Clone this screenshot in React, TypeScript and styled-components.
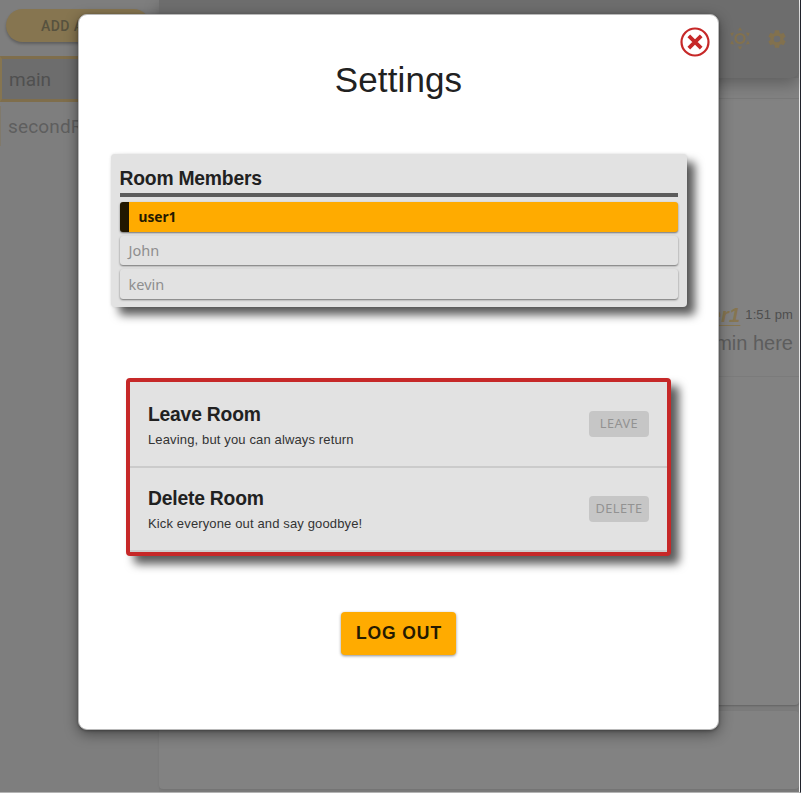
import React from "react";
import styled, { createGlobalStyle } from "styled-components";

const Global = createGlobalStyle`
  * { box-sizing: border-box; }
  html, body { margin: 0; padding: 0; overflow: hidden; }
  body { font-family: "Liberation Sans", Arial, sans-serif; color: #212121; }
  h1, h2, h3, p { margin: 0; }
  button { font: inherit; border: 0; padding: 0; margin: 0; }
`;

const Page = styled.div`
  position: relative;
  display: flex;
  width: 801px;
  height: 793px;
  overflow: hidden;
  background: #7e7e7e;
  border-right: 1px solid #20222b;
  border-bottom: 1px solid #b4b4b4;
`;

const Sidebar = styled.aside`
  width: 159px;
  flex: none;
  background: #7e7e7e;
  font-family: Roboto, sans-serif;
`;

const AddButton = styled.button`
  display: block;
  width: 144px;
  height: 33px;
  margin: 9px 0 0 6px;
  padding-left: 35px;
  border-radius: 17px;
  background: #867550;
  color: #57523f;
  font-size: 14px;
  line-height: 32px;
  font-weight: 500;
  letter-spacing: 0.4px;
  text-align: left;
  white-space: nowrap;
  box-shadow: 0 2px 3px rgba(0, 0, 0, 0.25);
`;

const RoomList = styled.nav`
  margin-top: 14px;
  font-size: 19px;
`;

const RoomItem = styled.div<{ $active?: boolean }>`
  display: flex;
  align-items: center;
  height: ${(p) => (p.$active ? 46 : 40)}px;
  margin-top: ${(p) => (p.$active ? 0 : 4)}px;
  padding-left: 7px;
  color: ${(p) => (p.$active ? "#505050" : "#5e5e5e")};
  background: ${(p) => (p.$active ? "#6d6d6d" : "transparent")};
  border: ${(p) => (p.$active ? "3px solid #7f6e4c" : "0")};
  border-left: ${(p) => (p.$active ? "2px solid #867550" : "1px solid #80796b")};
  letter-spacing: ${(p) => (p.$active ? 0 : 0.15)}px;
`;

const Main = styled.main`
  display: flex;
  flex-direction: column;
  flex: 1;
  border-right: 1px solid #f4f4f4;
  background: #7b7b7b;
`;

const Header = styled.header`
  position: relative;
  z-index: 1;
  flex: none;
  display: flex;
  justify-content: flex-end;
  gap: 15px;
  height: 78px;
  padding: 28px 11px 0 0;
  background: #6d6d6d;
  border-radius: 0 0 8px 0;
  color: #82714e;
  box-shadow: 0 6px 16px rgba(0, 0, 0, 0.28);
`;

const Feed = styled.section`
  flex: none;
  display: flex;
  flex-direction: column;
  height: 627px;
  background: #828282;
  border-radius: 0 0 4px 4px;
  box-shadow: 0 1px 2px rgba(0, 0, 0, 0.2);
`;

const FeedTop = styled.div`
  height: 21px;
  border-bottom: 1px solid #797979;
`;

const Message = styled.article`
  display: flex;
  flex-direction: column;
  align-items: flex-end;
  height: 278px;
  padding: 204px 6px 0 0;
  border-bottom: 1px solid #7b7b7b;
`;

const Meta = styled.div`
  display: flex;
  align-items: flex-start;
  gap: 5px;
  height: 28px;
  font-size: 13px;
  line-height: 24px;
  color: #4e4e4e;
  letter-spacing: 0.1px;
`;

const Author = styled.span`
  color: #867550;
  font-size: 20px;
  line-height: 25px;
  font-weight: 700;
  font-style: italic;
  text-decoration: underline;
  text-decoration-thickness: 1px;
  text-underline-offset: 3px;
`;

const Body = styled.p`
  font-size: 20px;
  line-height: 24px;
  color: #5d5d5d;
`;

const Composer = styled.section`
  flex: none;
  height: 78px;
  margin-top: 6px;
  background: #828282;
  border-radius: 4px;
  box-shadow: 0 1px 2px rgba(0, 0, 0, 0.08);
`;

const Modal = styled.div`
  position: absolute;
  z-index: 2;
  left: 78px;
  top: 14px;
  width: 641px;
  height: 716px;
  display: flex;
  flex-direction: column;
  align-items: center;
  border: 1px solid #b9b9b9;
  border-radius: 9px;
  background: #fff;
  box-shadow: 0 4px 14px rgba(0, 0, 0, 0.42), 0 1px 3px rgba(0, 0, 0, 0.3);
`;

const CloseButton = styled.button`
  position: absolute;
  right: 7px;
  top: 11px;
  width: 32px;
  height: 32px;
  background: none;
  color: #c62828;
`;

const Title = styled.h1`
  margin-top: 44px;
  height: 42px;
  line-height: 42px;
  font-size: 35px;
  font-weight: 400;
  letter-spacing: 0.1px;
`;

const Members = styled.section`
  width: 576px;
  height: 153px;
  margin: 53px 0 0;
  padding: 0 9px;
  border-radius: 4px;
  background: #e2e2e2;
  box-shadow: 8px 8px 10px rgba(0, 0, 0, 0.65), 0 0 3px rgba(0, 0, 0, 0.12);
`;

const MembersTitle = styled.h2`
  height: 43px;
  padding-top: 13px;
  border-bottom: 4px solid #5c5c5c;
  font-size: 19.3px;
  line-height: 23px;
  letter-spacing: -0.2px;
`;

const MemberList = styled.div`
  display: grid;
  gap: 4px;
  margin-top: 5px;
`;

const Member = styled.div<{ $current?: boolean }>`
  display: flex;
  align-items: center;
  height: ${(p) => (p.$current ? 30 : 29)}px;
  padding: 0 0 1px ${(p) => (p.$current ? 10 : 9)}px;
  border-left: ${(p) => (p.$current ? "9px solid #211700" : "0")};
  border-radius: 3px;
  background: ${(p) => (p.$current ? "#ffab00" : "#e2e2e2")};
  color: ${(p) => (p.$current ? "#251a00" : "#8e8e8e")};
  font-family: "Noto Sans", sans-serif;
  font-size: ${(p) => (p.$current ? 13.7 : 14.5)}px;
  font-weight: ${(p) => (p.$current ? 700 : 400)};
  box-shadow: 0 1px 2px rgba(0, 0, 0, 0.5);

  &:last-child {
    height: 30px;
  }
`;

const DangerZone = styled.section`
  flex: none;
  width: 545px;
  height: 178px;
  margin-top: 71px;
  border: 4px solid #c62828;
  border-radius: 4px;
  background: #e2e2e2;
  box-shadow: 8px 8px 10px rgba(0, 0, 0, 0.65);
`;

const Action = styled.div`
  display: flex;
  justify-content: space-between;
  height: 84px;
  padding: 0 18px;

  & + & {
    border-top: 2px solid #cbcbcb;
    height: 86px;
    border-bottom: 2px solid #cecece;
  }
`;

const ActionText = styled.div`
  padding-top: 20px;

  ${Action} + ${Action} & {
    padding-top: 18px;
  }
`;

const ActionTitle = styled.h3`
  font-size: 19.3px;
  line-height: 25px;
  letter-spacing: -0.2px;
`;

const ActionNote = styled.p`
  margin-top: 5px;
  font-size: 13px;
  line-height: 16px;
  letter-spacing: 0.14px;
  color: #333;
`;

const ActionButton = styled.button`
  width: 60px;
  height: 26px;
  margin-top: 29px;
  border-radius: 4px;
  background: #c6c6c6;
  color: #929292;
  font-family: "Noto Sans", sans-serif;
  font-size: 12.8px;
  line-height: 22px;
  letter-spacing: 0.4px;
  padding-bottom: 2px;

  ${Action} + ${Action} & {
    margin-top: 28px;
  }
`;

const LogOut = styled.button`
  flex: none;
  width: 115px;
  height: 43px;
  margin-top: 56px;
  padding-left: 1px;
  border-radius: 4px;
  background: #ffab00;
  color: #251a00;
  font-size: 17.5px;
  font-weight: 700;
  letter-spacing: 0.9px;
  box-shadow: 0 1px 3px rgba(0, 0, 0, 0.45);
`;

const SunIcon = () => (
  <svg width="22" height="22" viewBox="0 0 22 22" overflow="visible">
    <circle cx="11" cy="10.500" r="4.500" fill="none" stroke="currentColor" strokeWidth="2.200" />
    {[0, 60, 120, 180, 240, 300].map((a) => (
      <path key={a} d="M11-.7l2.200 3.200h-4.400z" fill="currentColor" transform={`rotate(${a} 11 10.500)`} />
    ))}
  </svg>
);

const GearIcon = () => (
  <svg width="22" height="22" viewBox="0 0 24 24" fill="currentColor">
    <path d="M19.14 12.94c.04-.3.06-.61.06-.94s-.02-.64-.07-.94l2.03-1.58a.49.49 0 0 0 .12-.61l-1.92-3.32a.49.49 0 0 0-.59-.22l-2.39.96a7 7 0 0 0-1.62-.94l-.36-2.54a.48.48 0 0 0-.48-.41h-3.84a.47.47 0 0 0-.47.41l-.36 2.54a7.300 7.300 0 0 0-1.620.940l-2.390-.960a.48.48 0 0 0-.59.22L2.740 8.870a.47.47 0 0 0 .12.61l2.030 1.580a6 6 0 0 0-.090.940c0 .31.02.64.07.94l-2.010 1.580a.49.49 0 0 0-.12.61l1.920 3.320c.12.22.37.29.59.22l2.390-.96c.5.38 1.030.7 1.620.94l.36 2.540c.05.24.24.41.48.41h3.840c.24 0 .44-.17.47-.41l.36-2.540a7 7 0 0 0 1.620-.94l2.390.96c.22.08.47 0 .59-.22l1.920-3.320a.47.47 0 0 0-.12-.61zM12 15.6a3.600 3.600 0 1 1 0-7.200 3.600 3.600 0 0 1 0 7.200z" />
  </svg>
);

const CloseIcon = () => (
  <svg width="32" height="32" viewBox="0 0 32 32" fill="none" stroke="currentColor">
    <circle cx="16" cy="16" r="13.500" strokeWidth="2.200" />
    <path d="M9.800 9.800l12.400 12.400M22.200 9.800L9.800 22.200" strokeWidth="3.800" />
  </svg>
);

const members = ["user1", "John", "kevin"];
const actions = [
  { title: "Leave Room", note: "Leaving, but you can always return", label: "LEAVE" },
  { title: "Delete Room", note: "Kick everyone out and say goodbye!", label: "DELETE" },
];

export default function App() {
  return (
    <>
      <Global />
      <Page>
        <Sidebar>
          <AddButton>ADD A ROOM</AddButton>
          <RoomList>
            <RoomItem $active>main</RoomItem>
            <RoomItem>secondRoom</RoomItem>
          </RoomList>
        </Sidebar>
        <Main>
          <Header>
            <SunIcon />
            <GearIcon />
          </Header>
          <Feed>
            <FeedTop />
            <Message>
              <Meta>
                <Author>user1</Author>
                <span>1:51 pm</span>
              </Meta>
              <Body>admin here</Body>
            </Message>
          </Feed>
          <Composer />
        </Main>
        <Modal role="dialog">
          <CloseButton aria-label="Close">
            <CloseIcon />
          </CloseButton>
          <Title>Settings</Title>
          <Members>
            <MembersTitle>Room Members</MembersTitle>
            <MemberList>
              {members.map((name, i) => (
                <Member key={name} $current={i === 0}>
                  {name}
                </Member>
              ))}
            </MemberList>
          </Members>
          <DangerZone>
            {actions.map((a) => (
              <Action key={a.label}>
                <ActionText>
                  <ActionTitle>{a.title}</ActionTitle>
                  <ActionNote>{a.note}</ActionNote>
                </ActionText>
                <ActionButton>{a.label}</ActionButton>
              </Action>
            ))}
          </DangerZone>
          <LogOut>LOG OUT</LogOut>
        </Modal>
      </Page>
    </>
  );
}
